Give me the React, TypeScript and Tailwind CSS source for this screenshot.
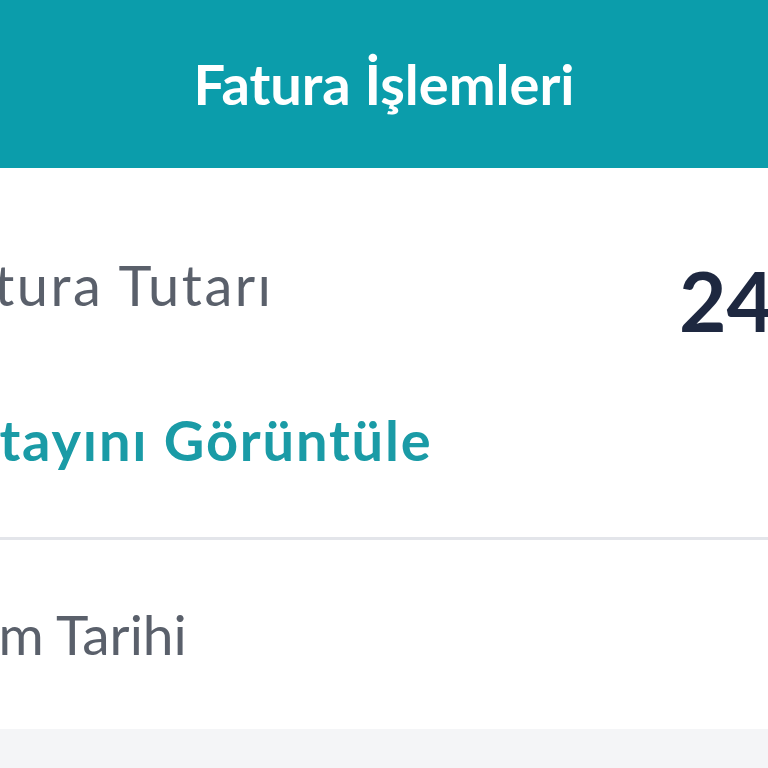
import React from 'react';

const InvoicePanel: React.FC = () => {
  return (
    <div className="w-[768px] h-[768px] overflow-hidden bg-[#f4f5f7] font-['Lato',sans-serif]">
      {/* Header */}
      <div className="h-[168px] bg-[#0b9dab] flex items-center justify-center">
        <h1 className="text-white text-[56px] leading-none font-bold whitespace-nowrap">Fatura İşlemleri</h1>
      </div>

      {/* Amount + details link */}
      <div className="bg-white pt-[89px] pb-[69px]">
        <div className="flex items-start justify-between">
          <span className="-ml-[66px] text-[56px] leading-none tracking-[2.5px] text-[#5a606b] whitespace-nowrap">Fatura Tutarı</span>
          <div className="w-[89px] overflow-hidden mt-[2px]">
            <span className="text-[82px] leading-none font-bold text-[#1e2840] whitespace-nowrap">24,90 TL</span>
          </div>
        </div>
        <div className="mt-[71px] -ml-[76px] text-[56px] leading-none font-bold tracking-[1.8px] text-[#1a9ba6] whitespace-nowrap">
          Detayını Görüntüle
        </div>
      </div>

      <div className="h-[3px] bg-[#e3e5ea]" />

      {/* Date row */}
      <div className="bg-white pt-[67px] pb-[67px]">
        <span className="block -ml-[102px] text-[55px] leading-none text-[#5a606b] whitespace-nowrap">Kesim Tarihi</span>
      </div>
    </div>
  );
};

export default function App() {
  return <InvoicePanel />;
}
